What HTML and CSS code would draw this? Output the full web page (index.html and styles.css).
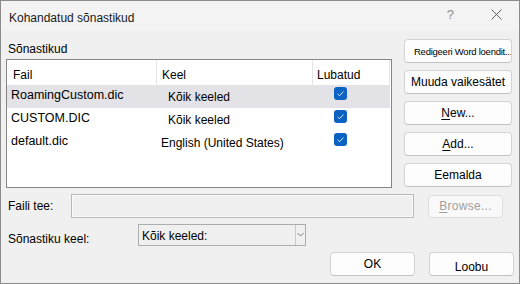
FILE: index.html
```html
<!DOCTYPE html>
<html lang="et">
<head>
<meta charset="utf-8">
<title>Kohandatud sõnastikud</title>
<link rel="stylesheet" href="styles.css">
</head>
<body>
<div class="window">
  <div class="titlebar">
    <span class="title">Kohandatud sõnastikud</span>
    <div class="title-controls">
      <span class="help">?</span>
      <svg class="close" width="11" height="11" viewBox="0 0 11 11" aria-hidden="true">
        <path d="M0.5 0.5 L10.5 10.5 M10.5 0.5 L0.5 10.5" stroke="#5c5c5c" stroke-width="1" fill="none"/>
      </svg>
    </div>
  </div>
  <div class="content">
    <div class="top">
      <div class="left">
        <div class="group-label">Sõnastikud</div>
        <div class="list">
          <div class="list-header">
            <div class="hcell h-file">Fail</div>
            <div class="hcell h-lang">Keel</div>
            <div class="hcell h-on">Lubatud</div>
          </div>
          <div class="row selected">
            <div class="cell c-file">RoamingCustom.dic</div>
            <div class="cell c-lang">Kõik keeled</div>
            <div class="cell c-on"><span class="check"><svg width="13" height="13" viewBox="0 0 13 13"><rect x="0" y="0" width="13" height="13" rx="3" fill="#0a62c2"/><path d="M3.6 6.9 L5.6 8.7 L9.4 4.6" stroke="#dbe8f7" stroke-width="1" fill="none"/></svg></span></div>
          </div>
          <div class="row">
            <div class="cell c-file">CUSTOM.DIC</div>
            <div class="cell c-lang">Kõik keeled</div>
            <div class="cell c-on"><span class="check"><svg width="13" height="13" viewBox="0 0 13 13"><rect x="0" y="0" width="13" height="13" rx="3" fill="#0a62c2"/><path d="M3.6 6.9 L5.6 8.7 L9.4 4.6" stroke="#dbe8f7" stroke-width="1" fill="none"/></svg></span></div>
          </div>
          <div class="row">
            <div class="cell c-file">default.dic</div>
            <div class="cell c-lang c-lang-wide">English (United States)</div>
            <div class="cell c-on"><span class="check"><svg width="13" height="13" viewBox="0 0 13 13"><rect x="0" y="0" width="13" height="13" rx="3" fill="#0a62c2"/><path d="M3.6 6.9 L5.6 8.7 L9.4 4.6" stroke="#dbe8f7" stroke-width="1" fill="none"/></svg></span></div>
          </div>
        </div>
      </div>
      <div class="side-buttons">
        <button class="btn btn-small">Redigeeri Word loendit...</button>
        <button class="btn">Muuda vaikesätet</button>
        <button class="btn"><u>N</u>ew...</button>
        <button class="btn"><u>A</u>dd...</button>
        <button class="btn">Eemalda</button>
      </div>
    </div>
    <div class="path-row">
      <span class="field-label path-label">Faili tee:</span>
      <div class="path-input"></div>
      <button class="btn btn-browse" disabled><u>B</u>rowse...</button>
    </div>
    <div class="lang-row">
      <span class="field-label lang-label">Sõnastiku keel:</span>
      <div class="select">
        <span class="select-text">Kõik keeled:</span>
        <span class="select-arrow">
          <svg width="7" height="5" viewBox="0 0 7 5"><path d="M0.5 1 L3.5 4 L6.5 1" stroke="#7a7a7a" stroke-width="1" fill="none"/></svg>
        </span>
      </div>
    </div>
    <div class="dialog-buttons">
      <button class="btn btn-dialog">OK</button>
      <button class="btn btn-dialog btn-cancel">Loobu</button>
    </div>
  </div>
</div>
</body>
</html>
```

FILE: styles.css
```css
* { box-sizing: border-box; }

html, body {
  margin: 0;
  padding: 0;
  background: #f0f0f0;
}

body {
  font-family: "Liberation Sans", Arial, sans-serif;
  font-size: 12px;
  color: #000;
}

.window {
  width: 520px;
  height: 284px;
  border: 1px solid #8c8c8c;
  background: #f0f0f0;
  display: flex;
  flex-direction: column;
  overflow: hidden;
}

.titlebar {
  height: 30px;
  flex: none;
  background: #f3f3f3;
  display: flex;
  align-items: center;
  padding-left: 8px;
  padding-top: 3px;
}

.title {
  font-size: 12px;
  color: #1a1a1a;
  flex: 1;
}

.title-controls {
  display: flex;
  align-items: center;
  margin-top: -6px;
}

.help {
  font-size: 13px;
  color: #8a8a8a;
  margin-right: 37px;
}

.close {
  display: block;
  margin-right: 17px;
}

.content {
  flex: 1;
  padding: 8px 6px 0 5px;
  display: flex;
  flex-direction: column;
}

.top {
  display: flex;
  height: 149px;
}

.left {
  width: 386px;
  display: flex;
  flex-direction: column;
}

.group-label {
  height: 20px;
  line-height: 20px;
  padding-left: 2px;
  font-size: 12px;
}

.list {
  height: 129px;
  border: 1px solid #858585;
  background: #fff;
}

.list-header {
  display: grid;
  grid-template-columns: 150px 156px 77px;
  height: 25px;
}

.hcell {
  border-right: 1px solid #e5e5e5;
  padding-top: 8px;
  line-height: 14px;
  font-size: 12px;
}

.h-file { padding-left: 6px; }
.h-lang { padding-left: 5px; }
.h-on { padding-left: 4px; }

.row {
  display: grid;
  grid-template-columns: 150px 156px 77px;
  height: 23px;
  width: 383px;
}

.row.selected {
  background: #e3e3e7;
}

.cell {
  white-space: nowrap;
}

.c-file {
  font-size: 12.5px;
  line-height: 20px;
  padding-left: 4px;
}

.c-lang {
  font-size: 12px;
  line-height: 21px;
  padding-top: 2px;
  padding-left: 11px;
}

.c-lang-wide {
  padding-left: 4px;
}

.c-on {
  padding-left: 21px;
  padding-top: 2px;
}

.check svg {
  display: block;
}

.side-buttons {
  margin-left: 12px;
  width: 108px;
  display: flex;
  flex-direction: column;
  gap: 7px;
}

.btn {
  font-family: "Liberation Sans", Arial, sans-serif;
  font-size: 12px;
  color: #000;
  height: 24px;
  background: #fdfdfd;
  border: 1px solid #d3d3d3;
  border-bottom-color: #c2c2c2;
  border-radius: 4px;
  padding: 0;
  margin: 0;
  display: flex;
  align-items: center;
  justify-content: center;
  white-space: nowrap;
  overflow: hidden;
}

.btn u {
  text-decoration: underline;
  text-underline-offset: 2px;
}

.btn-small {
  font-size: 9.5px;
  letter-spacing: -0.25px;
  justify-content: flex-start;
  padding-left: 9px;
}

.path-row {
  display: flex;
  align-items: center;
  margin-top: 6px;
  height: 24px;
}

.field-label {
  font-size: 12px;
  padding-left: 2px;
}

.path-label {
  width: 65px;
}

.path-input {
  width: 343px;
  height: 24px;
  border: 1px solid #b9b9b9;
  box-shadow: inset 0 0 0 1px #fbfbfb;
  background: #f0f0f0;
}

.btn-browse {
  margin-left: 14px;
  width: 75px;
  height: 23px;
  color: #a0a0a0;
  background: #f9f9f9;
  border-color: #dedede;
  letter-spacing: 0.3px;
}

.lang-row {
  display: flex;
  align-items: flex-start;
  margin-top: 6px;
  height: 22px;
}

.lang-label {
  width: 132px;
  padding-top: 8px;
  line-height: 14px;
}

.select {
  width: 168px;
  height: 22px;
  border: 1px solid #adadad;
  background: #f0f0f0;
  display: flex;
}

.select-text {
  flex: 1;
  padding-left: 3px;
  padding-top: 4px;
  line-height: 14px;
  font-size: 12px;
}

.select-arrow {
  width: 10px;
  border-left: 1px solid #c9c9c9;
  display: flex;
  justify-content: center;
  padding-top: 7px;
}

.select-arrow svg {
  display: block;
}

.dialog-buttons {
  display: flex;
  justify-content: flex-end;
  gap: 14px;
  margin-top: 6px;
  margin-right: -1px;
}

.btn-dialog {
  width: 85px;
  height: 24px;
}

.btn-cancel {
  padding-top: 5px;
}
```
